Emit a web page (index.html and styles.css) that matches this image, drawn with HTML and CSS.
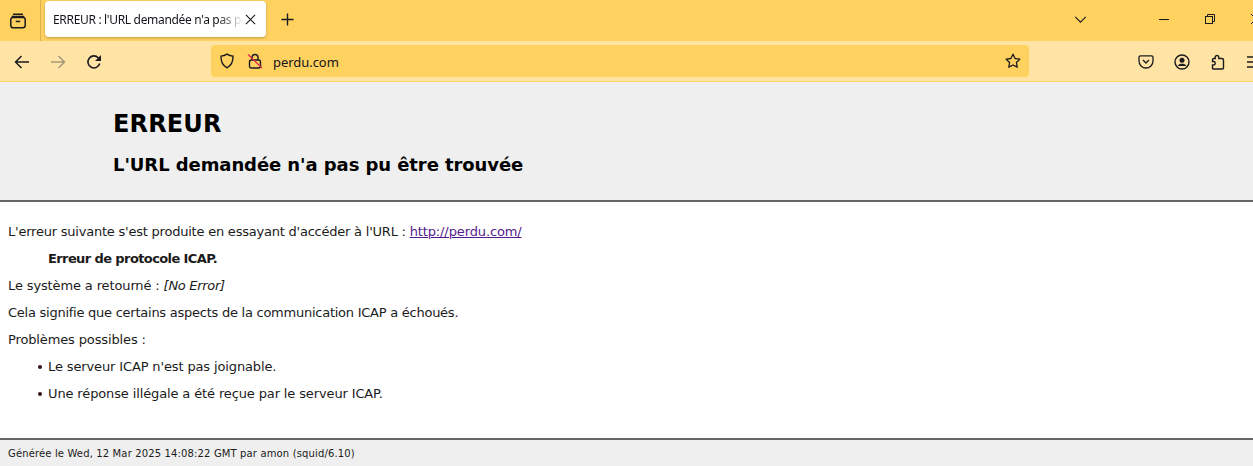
FILE: index.html
```html
<!DOCTYPE html>
<html lang="fr">
<head>
<meta charset="utf-8">
<title>ERREUR</title>
<link rel="stylesheet" href="styles.css">
</head>
<body>
<div class="browser">
  <div class="tabbar">
    <div class="tabs-btn">
      <svg class="ic" viewBox="0 0 20 20"><path d="M4.500 2.500h11M3 5h14" fill="none" stroke="#1b1b1f" stroke-width="1.500"/><rect x="2" y="6" width="16" height="11.500" rx="2.500" fill="none" stroke="#1b1b1f" stroke-width="1.700"/><path d="M7.500 10.500h5" stroke="#1b1b1f" stroke-width="1.700"/></svg>
    </div>
    <div class="tab">
      <span class="tab-title">ERREUR : l'URL demandée n'a pas pu être trouvée</span>
      <svg class="tab-close" viewBox="0 0 12 12"><path d="M1 1l10 10M11 1L1 11" stroke="#1b1b1f" stroke-width="1.200" fill="none"/></svg>
    </div>
    <div class="new-tab">
      <svg class="ic-plus" viewBox="0 0 14 14"><path d="M7 0.500v13M0.500 7h13" stroke="#1b1b1f" stroke-width="1.500"/></svg>
    </div>
    <div class="tabbar-right">
      <svg class="chev" viewBox="0 0 14 8"><path d="M1 1l6 6 6-6" fill="none" stroke="#1b1b1f" stroke-width="1.300"/></svg>
      <div class="win-btn"><svg class="win-ic" viewBox="0 0 10 10"><path d="M0 5.500h10" stroke="#1b1b1f" stroke-width="1"/></svg></div>
      <div class="win-btn"><svg class="win-ic" viewBox="0 0 10 10"><path d="M2.500 2V.5h7v7H8" fill="none" stroke="#1b1b1f" stroke-width="1"/><rect x=".5" y="2.500" width="7" height="7" fill="none" stroke="#1b1b1f" stroke-width="1"/></svg></div>
      <div class="win-btn"><svg class="win-ic" viewBox="0 0 10 10"><path d="M0 0l10 10M10 0L0 10" stroke="#1b1b1f" stroke-width="1"/></svg></div>
    </div>
  </div>
  <div class="navbar">
    <div class="nav-left">
      <svg class="ic16" viewBox="0 0 16 16"><path d="M15 8H1.500M7.500 2L1.500 8l6 6" fill="none" stroke="#1b1b1f" stroke-width="1.500"/></svg>
      <svg class="ic16" viewBox="0 0 16 16"><path d="M1 8h13.500M8.500 2l6 6-6 6" fill="none" stroke="#a89878" stroke-width="1.500"/></svg>
      <svg class="ic16" viewBox="0 0 16 16"><path d="M13.700 9.500A6 6 0 1 1 12.200 3.700L14 5.500" fill="none" stroke="#1b1b1f" stroke-width="1.600"/><path d="M15 1v6H9z" fill="#1b1b1f"/></svg>
    </div>
    <div class="urlbar">
      <svg class="ic16 shield" viewBox="0 0 16 16"><path d="M8 1.200c2 1.300 4 1.800 6 1.900.2 5.800-1.700 9.500-6 11.700C3.700 12.600 1.800 8.900 2 3.100c2-.1 4-.6 6-1.900z" fill="none" stroke="#1b1b1f" stroke-width="1.400"/></svg>
      <svg class="ic16 lock" viewBox="0 0 16 16"><path d="M5 7V4.500a3 3 0 0 1 6 0V7" fill="none" stroke="#1b1b1f" stroke-width="1.400"/><rect x="2.500" y="7" width="11" height="8" rx="2" fill="none" stroke="#1b1b1f" stroke-width="1.400"/><path d="M1 1.500l14 13.500" stroke="#e22850" stroke-width="1.300"/></svg>
      <span class="url">perdu.com</span>
      <svg class="ic16 star" viewBox="0 0 16 16"><path d="M8 1.200l2.100 4.300 4.700.7-3.400 3.300.8 4.700L8 12l-4.200 2.200.8-4.700L1.200 6.200l4.700-.7z" fill="none" stroke="#1b1b1f" stroke-width="1.300" stroke-linejoin="round"/></svg>
    </div>
    <div class="nav-right">
      <svg class="ic16" viewBox="0 0 16 16"><path d="M2.500 1.800h11A1.500 1.500 0 0 1 15 3.300V7a7 7 0 0 1-14 0V3.300a1.500 1.500 0 0 1 1.500-1.500z" fill="none" stroke="#1b1b1f" stroke-width="1.300"/><path d="M5 6l3 3 3-3" fill="none" stroke="#1b1b1f" stroke-width="1.400"/></svg>
      <svg class="ic16" viewBox="0 0 16 16"><circle cx="8" cy="8" r="7" fill="none" stroke="#1b1b1f" stroke-width="1.400"/><circle cx="8" cy="6.300" r="2.500" fill="#1b1b1f"/><path d="M3.500 12c1-1.800 2.500-2.300 4.500-2.300s3.500.5 4.500 2.300z" fill="#1b1b1f"/></svg>
      <svg class="ic16" viewBox="0 0 16 16"><path d="M7 1.500a1.800 1.800 0 0 1 1.800 1.800V4.500H12a1.500 1.500 0 0 1 1.500 1.500v8a1 1 0 0 1-1 1H3.500a1 1 0 0 1-1-1v-3h1a1.700 1.700 0 0 0 0-3.500h-1V6A1.500 1.500 0 0 1 4 4.500h1.200V3.300A1.800 1.800 0 0 1 7 1.500z" fill="none" stroke="#1b1b1f" stroke-width="1.400"/></svg>
      <svg class="ic16" viewBox="0 0 16 16"><path d="M1 3h14M1 8h14M1 13h14" stroke="#1b1b1f" stroke-width="1.400"/></svg>
    </div>
  </div>
</div>
<div class="page">
  <header class="titles">
    <h1>ERREUR</h1>
    <h2>L'URL demandée n'a pas pu être trouvée</h2>
  </header>
  <main class="content">
    <p>L'erreur suivante s'est produite en essayant d'accéder à l'URL : <a href="#">http://perdu.com/</a></p>
    <blockquote><b>Erreur de protocole ICAP.</b></blockquote>
    <p class="wide">Le système a retourné : <i>[No Error]</i></p>
    <p class="tight">Cela signifie que certains aspects de la communication ICAP a échoués.</p>
    <p class="wide">Problèmes possibles :</p>
    <ul class="wide">
      <li>Le serveur ICAP n'est pas joignable.</li>
      <li>Une réponse illégale a été reçue par le serveur ICAP.</li>
    </ul>
  </main>
  <footer class="foot">Générée le Wed, 12 Mar 2025 14:08:22 GMT par amon (squid/6.10)</footer>
</div>
</body>
</html>
```
FILE: styles.css
```css
html, body { margin: 0; padding: 0; height: 466px; overflow: hidden; background: #fff; }
body { display: flex; flex-direction: column; font-family: "DejaVu Sans", Verdana, sans-serif; color: #1b1b1b; }
.browser { flex: none; font-family: "Open Sans", "Noto Sans", sans-serif; }
.tabbar { height: 41px; background: #ffd260; display: flex; align-items: flex-start; }
.tabs-btn { width: 36px; height: 41px; padding-right: 4px; border-right: 1px solid #d9b050; display: flex; align-items: center; justify-content: center; }
.ic { width: 18px; height: 18px; }
.tab { margin: 1px 0 0 4px; width: 221px; height: 36px; background: #fff; border-radius: 4px; box-shadow: 0 1px 3px rgba(0,0,0,.25); display: flex; align-items: center; padding: 0 9px 0 8px; box-sizing: border-box; }
.tab-title { font: 12px "Noto Sans", "Open Sans", sans-serif; white-space: nowrap; overflow: hidden; flex: 1; letter-spacing: -.32px; color: #15141a; -webkit-mask-image: linear-gradient(to right, #000 165px, transparent 190px); mask-image: linear-gradient(to right, #000 165px, transparent 190px); }
.tab-close { width: 11px; height: 11px; flex: none; margin-left: 2px; margin-right: 1px; }
.new-tab { width: 42px; height: 39px; display: flex; align-items: center; justify-content: center; }
.ic-plus { width: 13px; height: 13px; }
.tabbar-right { margin-left: auto; margin-right: -26px; display: flex; align-items: center; height: 38px; }
.chev { width: 13px; height: 7px; margin-right: 54px; }
.win-btn { width: 46px; display: flex; justify-content: center; }
.win-ic { width: 10px; height: 10px; }
.navbar { height: 40px; background: #ffe4a6; border-bottom: 1px solid #ffd260; display: flex; align-items: center; }
.nav-left { width: 211px; display: flex; align-items: center; gap: 20px; padding: 2px 0 0 14px; box-sizing: border-box; }
.ic16 { width: 16px; height: 16px; flex: none; }
.urlbar { width: 818px; height: 32px; background: #ffd260; border-radius: 4px; display: flex; align-items: center; padding: 0 8px; box-sizing: border-box; }
.shield { margin-right: 12px; }
.lock { margin-right: 10px; }
.url { font: 13px "Noto Sans", "Open Sans", sans-serif; color: #15141a; flex: 1; padding-top: 2px; letter-spacing: -.05px; }
.nav-right { flex: 1; display: flex; align-items: center; gap: 20px; padding: 1px 0 0 109px; overflow: hidden; box-sizing: border-box; }
.page { flex: 1; display: flex; flex-direction: column; min-height: 0; }
.titles { background: #efefef; border-bottom: 2px solid #666; padding: 28px 0 0 113px; flex: none; height: 90px; color: #000; }
h1 { font-size: 24px; line-height: 28px; margin: 0 0 16px; font-weight: 700; letter-spacing: .15px; }
h2 { font-size: 18px; line-height: 22px; margin: 0; font-weight: 700; letter-spacing: -.08px; }
.content { flex: 1; padding: 0 8px; font-size: 13px; line-height: 15px; letter-spacing: -.22px; }
.content p { margin: 22px 0 12px; }
.content p + p, .content blockquote + p { margin-top: 12px; }
.content .wide { letter-spacing: -.13px; }
.content .tight { letter-spacing: -.25px; }
blockquote { margin: 12px 0 12px 40px; }
blockquote b { letter-spacing: -.6px; }
a { color: #551a8b; letter-spacing: -.12px; }
i { letter-spacing: -.3px; }
ul { margin: 12px 0 0; padding-left: 40px; list-style: none; }
li { margin-bottom: 12px; position: relative; }
li::before { content: ""; position: absolute; left: -10px; top: 6px; width: 4px; height: 4px; border-radius: 50%; background: #3a1414; }
.foot { flex: none; background: #efefef; border-top: 2px solid #666; height: 26px; line-height: 28px; padding-left: 8px; font-size: 10px; letter-spacing: .14px; }
```
